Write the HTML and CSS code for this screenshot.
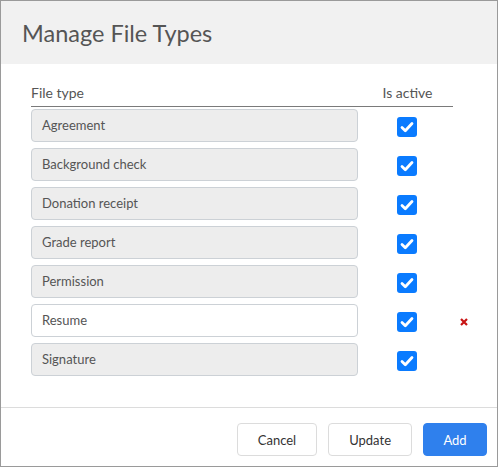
FILE: index.html
```html
<!DOCTYPE html>
<html lang="en">
<head>
    <meta charset="UTF-8">
    <meta name="viewport" content="width=device-width, initial-scale=1.0">
    <title>Manage File Types</title>
    <link rel="stylesheet" href="styles.css">
</head>
<body>
    <div class="modal">
        <div class="modal-header">
            <h1 class="title">Manage File Types</h1>
        </div>
        <div class="modal-body">
            <div class="types">
                <div class="head name">File type</div>
                <div class="head active">Is active</div>
                <div class="head"></div>

                <div class="field">Agreement</div>
                <div class="check"><span class="box"><svg viewBox="0 0 20 20"><path d="M5 10.5l3.3 3.3L15 6.5" /></svg></span></div>
                <div class="remove"></div>

                <div class="field">Background check</div>
                <div class="check"><span class="box"><svg viewBox="0 0 20 20"><path d="M5 10.5l3.3 3.3L15 6.5" /></svg></span></div>
                <div class="remove"></div>

                <div class="field">Donation receipt</div>
                <div class="check"><span class="box"><svg viewBox="0 0 20 20"><path d="M5 10.5l3.3 3.3L15 6.5" /></svg></span></div>
                <div class="remove"></div>

                <div class="field">Grade report</div>
                <div class="check"><span class="box"><svg viewBox="0 0 20 20"><path d="M5 10.5l3.3 3.3L15 6.5" /></svg></span></div>
                <div class="remove"></div>

                <div class="field">Permission</div>
                <div class="check"><span class="box"><svg viewBox="0 0 20 20"><path d="M5 10.5l3.3 3.3L15 6.5" /></svg></span></div>
                <div class="remove"></div>

                <div class="field editable">Resume</div>
                <div class="check"><span class="box"><svg viewBox="0 0 20 20"><path d="M5 10.5l3.3 3.3L15 6.5" /></svg></span></div>
                <div class="remove"><svg viewBox="0 0 8 8"><path d="M1 1l6 6M7 1l-6 6" /></svg></div>

                <div class="field">Signature</div>
                <div class="check"><span class="box"><svg viewBox="0 0 20 20"><path d="M5 10.5l3.3 3.3L15 6.5" /></svg></span></div>
                <div class="remove"></div>
            </div>
        </div>
        <div class="modal-footer">
            <button class="btn">Cancel</button>
            <button class="btn">Update</button>
            <button class="btn primary">Add</button>
        </div>
    </div>
</body>
</html>
```

FILE: styles.css
```css
* {
  margin: 0;
  padding: 0;
  box-sizing: border-box;
}
body {
  background: #fff;
  font-family: Lato, "Liberation Sans", sans-serif;
  color: #555;
}
.modal {
  width: 498px;
  height: 467px;
  border: 1px solid #9a9a9a;
  display: flex;
  flex-direction: column;
}
.modal-header {
  height: 63px;
  background: #f1f1f1;
  display: flex;
  align-items: center;
  padding-left: 21px;
}
.title {
  font-size: 23.5px;
  font-weight: normal;
  color: #555;
}
.modal-body {
  padding: 0 0 31px 30px;
}
.types {
  display: grid;
  grid-template-columns: 327px 95px 45px;
  grid-template-rows: 39px;
  grid-auto-rows: 33px;
  row-gap: 6px;
}
.head {
  grid-row: 1;
  align-self: start;
  height: 43px;
  padding-top: 20px;
  font-size: 14px;
  line-height: 17px;
}
.head.name,
.head.active {
  border-bottom: 1px solid #7a7a7a;
}
.head.active {
  text-align: center;
  padding-left: 4px;
}
.field {
  border: 1px solid #ccd1d6;
  border-radius: 4px;
  background: #ededed;
  font-size: 13px;
  line-height: 31px;
  padding-left: 10px;
  color: #555;
}
.field.editable {
  background: #fff;
}
.check {
  display: flex;
  align-items: center;
  justify-content: center;
  padding-left: 3px;
  padding-top: 3px;
}
.box {
  width: 20px;
  height: 20px;
  border-radius: 3px;
  background: #0a7bff;
  display: flex;
}
.box svg {
  width: 20px;
  height: 20px;
  fill: none;
  stroke: #fff;
  stroke-width: 2.8;
  stroke-linecap: round;
  stroke-linejoin: round;
}
.remove {
  display: flex;
  align-items: center;
  padding-left: 7px;
  padding-top: 3px;
}
.remove svg {
  width: 8px;
  height: 8px;
  stroke: #c81414;
  stroke-width: 2.2;
}
.modal-footer {
  border-top: 1px solid #dcdcdc;
  flex: 1;
  display: flex;
  justify-content: flex-end;
  align-items: flex-start;
  gap: 11px;
  padding: 15px 10px 0 0;
}
.btn {
  height: 33px;
  border: 1px solid #dcdcdc;
  border-radius: 4px;
  background: #fff;
  color: #333;
  font-family: Lato, "Liberation Sans", sans-serif;
  font-size: 13px;
  padding: 0 20px;
}
.btn.primary {
  background: #2f80ed;
  border-color: #2f80ed;
  color: #fff;
  width: 64px;
  padding: 0;
}
```
